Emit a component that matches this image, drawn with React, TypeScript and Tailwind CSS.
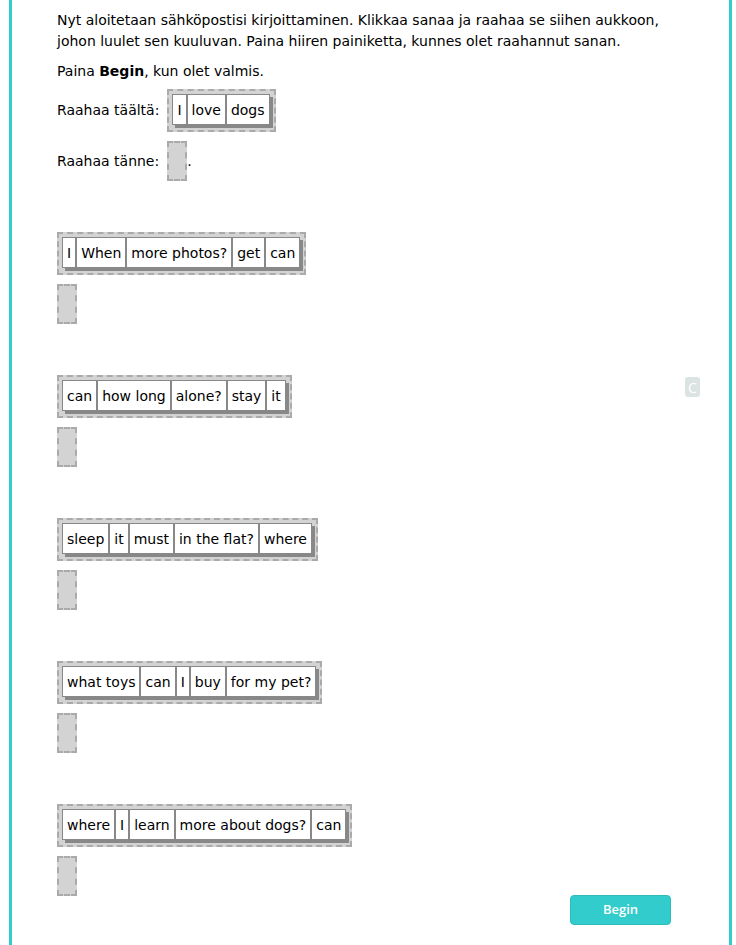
import React from "react";

const groups: string[][] = [
  ["I", "When", "more photos?", "get", "can"],
  ["can", "how long", "alone?", "stay", "it"],
  ["sleep", "it", "must", "in the flat?", "where"],
  ["what toys", "can", "I", "buy", "for my pet?"],
  ["where", "I", "learn", "more about dogs?", "can"],
];

function Group({ words }: { words: string[] }) {
  return (
    <div className="inline-flex self-start border-2 border-dashed border-[#aaaaaa] bg-[#d3d3d3] pt-[3px] pl-[3px] pr-[4px] pb-[5px] align-middle">
      {words.map((w, i) => (
        <div
          key={i}
          className="h-[31px] flex items-center bg-white border border-[#888888] px-[4px] shadow-[3px_3px_0_#888888] whitespace-pre leading-none"
        >
          {w}
        </div>
      ))}
    </div>
  );
}

function Drop() {
  return <div className="inline-block w-[20px] h-[40px] border-2 border-dashed border-[#aaaaaa] bg-[#d3d3d3] align-middle" />;
}

export default function App() {
  return (
    <div className="bg-white min-h-[945px] text-black text-[14px]" style={{ fontFamily: '"DejaVu Sans", Verdana, sans-serif' }}>
      <div className="relative ml-[9px] w-[723px] min-h-[945px] border-l-[3px] border-r-[3px] border-[#33cccc] pl-[45px] pt-[10px] pr-[40px]">
        <p className="leading-[21px]">
          Nyt aloitetaan sähköpostisi kirjoittaminen. Klikkaa sanaa ja raahaa se siihen aukkoon, johon luulet sen kuuluvan. Paina hiiren painiketta, kunnes olet raahannut sanan.
        </p>
        <p className="leading-[21px] mt-[9px]">
          Paina <b>Begin</b>, kun olet valmis.
        </p>
        <div className="mt-[7px] flex items-center gap-[8px]">
          <span>Raahaa täältä:</span>
          <Group words={["I", "love", "dogs"]} />
        </div>
        <div className="mt-[9px] flex items-center gap-[8px]">
          <span>Raahaa tänne:</span>
          <Drop />
          <span className="-ml-[8px]">.</span>
        </div>
        <div className="flex flex-col">
          {groups.map((g, i) => (
            <div key={i} className="flex flex-col mt-[51px]">
              <Group words={g} />
              <div className="mt-[9px] flex">
                <Drop />
              </div>
            </div>
          ))}
        </div>
        <div className="flex justify-end pr-[18px] -mt-[1px]">
          <button
            className="w-[101px] h-[30px] rounded-[4px] bg-[#33cccc] border border-[#2dbdbd] text-white text-[13px] font-semibold"
            style={{ fontFamily: '"Open Sans", sans-serif' }}
          >
            Begin
          </button>
        </div>
        <div
          className="absolute left-[673px] top-[377px] w-[15px] h-[20px] rounded-[3px] bg-[#dce3e3] text-white text-[14px] flex items-center justify-center"
          style={{ fontFamily: '"Open Sans", sans-serif' }}
        >
          C
        </div>
      </div>
    </div>
  );
}
